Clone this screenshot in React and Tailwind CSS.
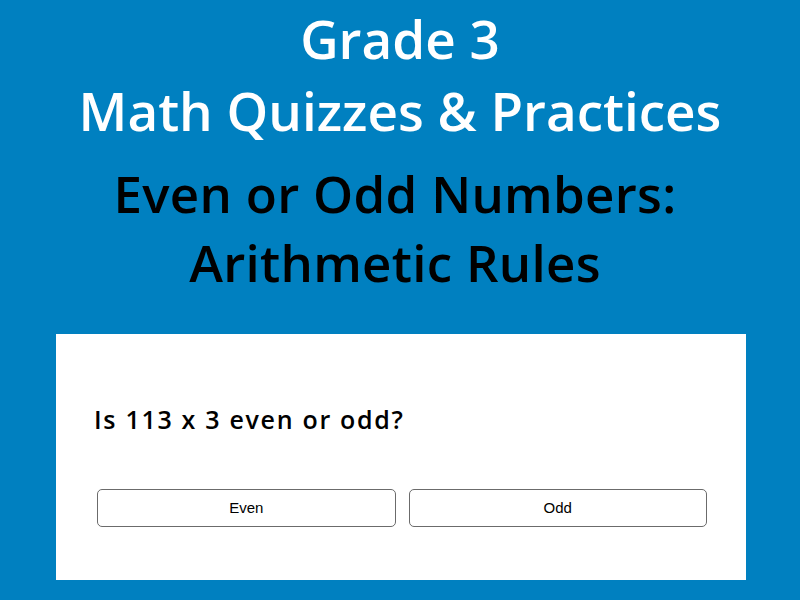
export default function App() {
  return (
    <div className="w-[800px] h-[600px] bg-[#0080c0] overflow-hidden" style={{ fontFamily: '"Open Sans", "Noto Sans", sans-serif' }}>
      <div className="pt-[3px] text-center">
        <h1 className="text-white font-semibold text-[53px] leading-[72px]">
          Grade 3
          <br />
          Math Quizzes &amp; Practices
        </h1>
        <h2 className="mt-[12px] pr-[10px] text-black font-semibold text-[51px] leading-[69px] tracking-[0.3px]">
          Even or Odd Numbers:
          <br />
          Arithmetic Rules
        </h2>
      </div>
      <div className="mt-[37px] ml-[56px] w-[690px] h-[246px] bg-white px-[38px] pt-[68px]">
        <p className="text-[25px] font-semibold tracking-[1.7px] text-black leading-[34px]">Is 113 x 3 even or odd?</p>
        <div className="mt-[53px] pl-[3px] pr-[1px] grid grid-cols-2 gap-[13px]">
          <button className="h-[38px] rounded-[5px] border border-[#6b6b6b] bg-white text-[15px] text-black" style={{ fontFamily: '"Liberation Sans", Arial, sans-serif' }}>
            Even
          </button>
          <button className="h-[38px] rounded-[5px] border border-[#6b6b6b] bg-white text-[15px] text-black" style={{ fontFamily: '"Liberation Sans", Arial, sans-serif' }}>
            Odd
          </button>
        </div>
      </div>
    </div>
  )
}
